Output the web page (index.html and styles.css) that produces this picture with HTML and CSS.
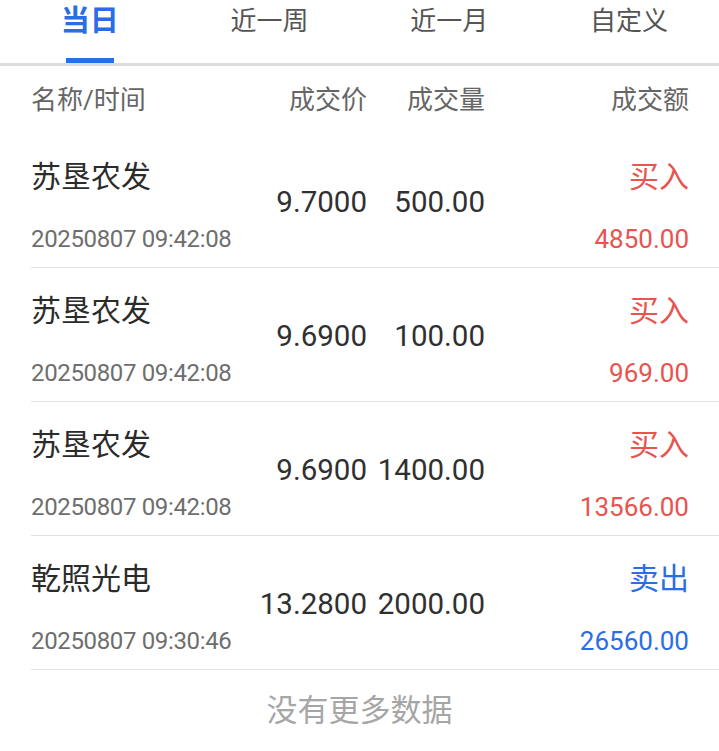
FILE: index.html
```html
<!DOCTYPE html>
<html lang="zh-CN">
<head>
<meta charset="utf-8">
<title>成交</title>
<link rel="stylesheet" href="styles.css">
</head>
<body>
<div class="tabs">
  <div class="tab active"><span class="tab-label">当日</span><span class="tab-bar"></span></div>
  <div class="tab"><span class="tab-label">近一周</span></div>
  <div class="tab"><span class="tab-label">近一月</span></div>
  <div class="tab"><span class="tab-label">自定义</span></div>
</div>
<div class="head">
  <div class="h-name">名称/时间</div>
  <div class="h-num">成交价</div>
  <div class="h-num">成交量</div>
  <div class="h-num">成交额</div>
</div>
<div class="row">
  <div class="c-name"><div class="name">苏垦农发</div><div class="time">20250807 09:42:08</div></div>
  <div class="c-num">9.7000</div>
  <div class="c-num">500.00</div>
  <div class="c-amt buy"><div class="side">买入</div><div class="amt">4850.00</div></div>
</div>
<div class="row">
  <div class="c-name"><div class="name">苏垦农发</div><div class="time">20250807 09:42:08</div></div>
  <div class="c-num">9.6900</div>
  <div class="c-num">100.00</div>
  <div class="c-amt buy"><div class="side">买入</div><div class="amt">969.00</div></div>
</div>
<div class="row">
  <div class="c-name"><div class="name">苏垦农发</div><div class="time">20250807 09:42:08</div></div>
  <div class="c-num">9.6900</div>
  <div class="c-num">1400.00</div>
  <div class="c-amt buy"><div class="side">买入</div><div class="amt">13566.00</div></div>
</div>
<div class="row">
  <div class="c-name"><div class="name">乾照光电</div><div class="time">20250807 09:30:46</div></div>
  <div class="c-num">13.2800</div>
  <div class="c-num">2000.00</div>
  <div class="c-amt sell"><div class="side">卖出</div><div class="amt">26560.00</div></div>
</div>
<div class="more">没有更多数据</div>
</body>
</html>
```
FILE: styles.css
```css
* { box-sizing: border-box; }
html, body { margin: 0; padding: 0; background: #ffffff; }
body {
  font-family: Roboto, "Noto Sans CJK SC", sans-serif;
  color: #2b2b2b;
  width: 719px;
}
.tabs {
  display: grid;
  grid-template-columns: repeat(4, 1fr);
  height: 66px;
  border-bottom: 3px solid #dddddd;
}
.tab {
  display: flex;
  flex-direction: column;
  align-items: center;
}
.tab-label {
  font-size: 26px;
  line-height: 42px;
  color: #555555;
}
.tab.active .tab-label {
  font-size: 29px;
  font-weight: bold;
  color: #2a6de6;
}
.tab-bar {
  margin-top: auto;
  width: 48px;
  height: 5px;
  background: #2a6de6;
}
.head, .row {
  display: grid;
  grid-template-columns: 216px 120px 118px 1fr;
  margin-left: 31px;
  padding-right: 30px;
}
.head {
  height: 68px;
  align-items: center;
  font-size: 26px;
  line-height: 36px;
  color: #666666;
}
.h-num { text-align: right; }
.row {
  height: 134px;
  border-bottom: 1px solid #e2e2e2;
}
.c-name, .c-amt {
  display: flex;
  flex-direction: column;
  padding-top: 23px;
}
.c-amt { align-items: flex-end; }
.name, .side {
  font-size: 30px;
  line-height: 40px;
}
.time {
  margin-top: 25px;
  font-size: 24px;
  line-height: 34px;
  letter-spacing: -0.35px;
  color: #6e6e6e;
}
.amt {
  margin-top: 25px;
  font-size: 26px;
  line-height: 34px;
}
.c-num {
  align-self: center;
  padding-top: 3px;
  text-align: right;
  font-size: 29.5px;
  line-height: 40px;
  color: #303030;
}
.buy { color: #e8544f; }
.sell { color: #2a6de6; }
.more {
  height: 81px;
  line-height: 81px;
  text-align: center;
  font-size: 31px;
  color: #a6a6a6;
}
```
